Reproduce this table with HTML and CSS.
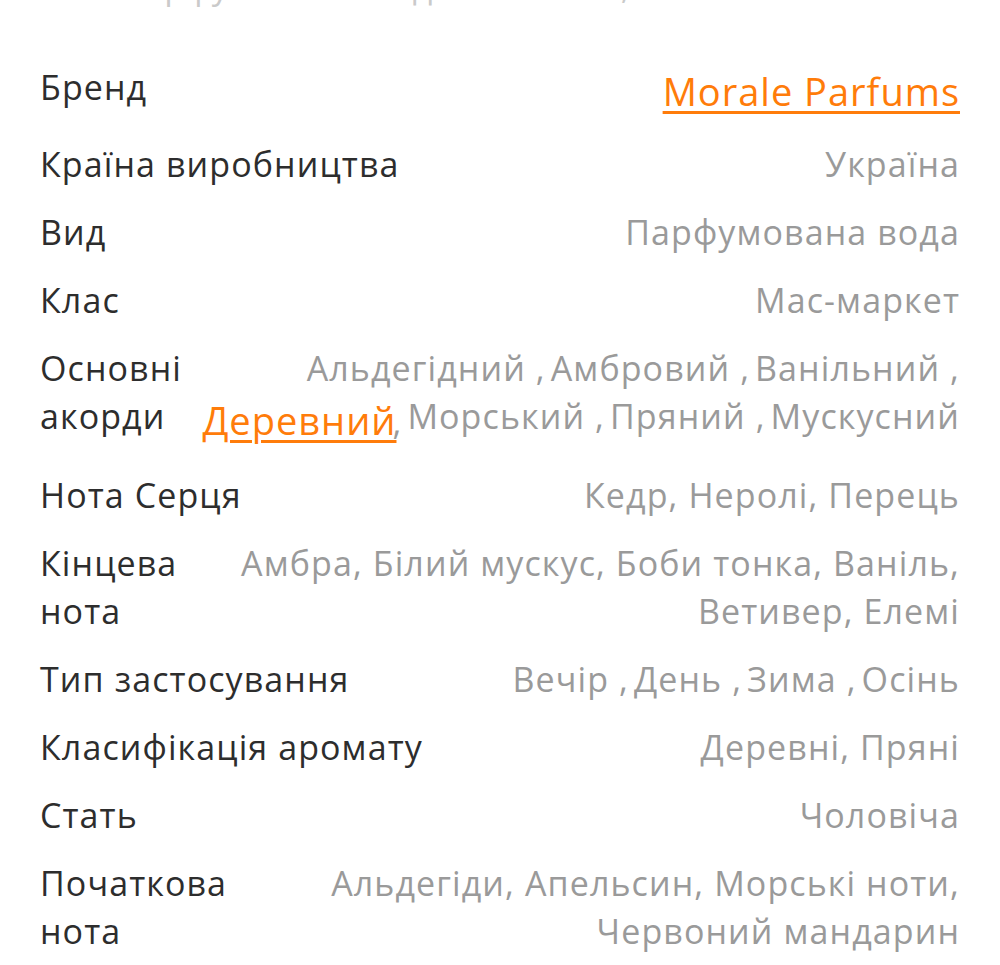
FILE: index.html
```html
<!DOCTYPE html>
<html lang="uk">
<head>
<meta charset="utf-8">
<title>Характеристики</title>
<link rel="stylesheet" href="styles.css">
</head>
<body>
<div class="page">
  <p class="title-tail">мл Парфумована вода чоловіча, 50 мл</p>
  <dl class="specs">
    <div class="row">
      <dt class="label">Бренд</dt>
      <dd class="value"><a class="link link--brand" href="#">Morale Parfums</a></dd>
    </div>
    <div class="row">
      <dt class="label">Країна виробництва</dt>
      <dd class="value">Україна</dd>
    </div>
    <div class="row">
      <dt class="label">Вид</dt>
      <dd class="value">Парфумована вода</dd>
    </div>
    <div class="row">
      <dt class="label">Клас</dt>
      <dd class="value">Мас-маркет</dd>
    </div>
    <div class="row">
      <dt class="label label--chords">Основні акорди</dt>
      <dd class="value value--list">
        <span class="item">Альдегідний ,</span>
        <span class="item">Амбровий ,</span>
        <span class="item">Ванільний ,</span>
        <span class="item"><a class="link" href="#">Деревний</a><span class="tuck">,</span></span>
        <span class="item">Морський ,</span>
        <span class="item">Пряний ,</span>
        <span class="item">Мускусний</span>
      </dd>
    </div>
    <div class="row">
      <dt class="label">Нота Серця</dt>
      <dd class="value">Кедр, Неролі, Перець</dd>
    </div>
    <div class="row">
      <dt class="label label--final">Кінцева нота</dt>
      <dd class="value">Амбра, Білий мускус, Боби тонка, Ваніль, Ветивер, Елемі</dd>
    </div>
    <div class="row">
      <dt class="label">Тип застосування</dt>
      <dd class="value value--list">
        <span class="item">Вечір ,</span>
        <span class="item">День ,</span>
        <span class="item">Зима ,</span>
        <span class="item">Осінь</span>
      </dd>
    </div>
    <div class="row">
      <dt class="label">Класифікація аромату</dt>
      <dd class="value">Деревні, Пряні</dd>
    </div>
    <div class="row">
      <dt class="label">Стать</dt>
      <dd class="value">Чоловіча</dd>
    </div>
    <div class="row">
      <dt class="label label--top">Початкова нота</dt>
      <dd class="value">Альдегіди, Апельсин, Морські ноти, Червоний мандарин</dd>
    </div>
  </dl>
</div>
</body>
</html>
```

FILE: styles.css
```css
html, body {
  margin: 0;
  padding: 0;
  background: #ffffff;
}

body {
  font-family: "Open Sans", "Noto Sans", "Liberation Sans", sans-serif;
  font-size: 34px;
  letter-spacing: 1.1px;
  line-height: 48px;
  color: #333333;
  overflow: hidden;
}

.page {
  padding: 0 40px;
}

.title-tail {
  margin: -38px 0 0 22px;
  color: #cacaca;
  white-space: nowrap;
}

.specs {
  margin: 53px 0 0;
  padding: 0;
  display: flex;
  flex-direction: column;
  gap: 20px;
}

.row {
  display: flex;
  align-items: flex-start;
  justify-content: space-between;
  gap: 10px;
}

.label {
  margin: 0;
  flex: 0 0 auto;
  color: #2d2d2d;
}

.label--chords { flex-basis: 140px; }
.label--final { flex-basis: 176px; }
.label--top { flex-basis: 200px; }

.value {
  margin: 0;
  flex: 1 1 auto;
  text-align: right;
  color: #9a9a9a;
}

.value--list {
  display: flex;
  flex-wrap: wrap;
  justify-content: flex-end;
  column-gap: 5px;
}

.value--list .item:has(.link) {
  line-height: 57px;
}

.link {
  color: #ff7c0a;
  font-size: 38px;
  letter-spacing: 1px;
  text-decoration: underline;
  text-decoration-thickness: 3px;
  text-underline-offset: 5px;
}

.link--brand {
  line-height: 57px;
}

.tuck {
  margin-left: -4px;
}
```
